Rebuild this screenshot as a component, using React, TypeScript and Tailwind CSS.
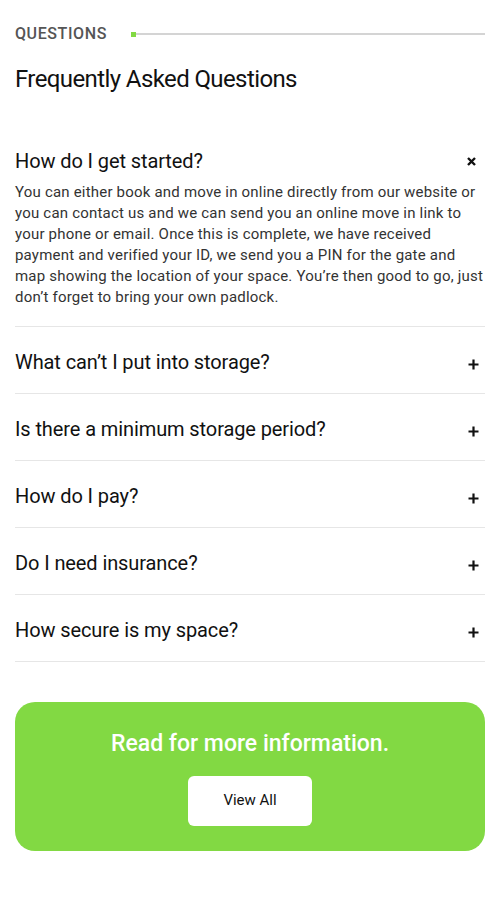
import { useState } from "react";

type Faq = {
  question: string;
  answer: string;
};

const faqs: Faq[] = [
  {
    question: "How do I get started?",
    answer:
      "You can either book and move in online directly from our website or you can contact us and we can send you an online move in link to your phone or email. Once this is complete, we have received payment and verified your ID, we send you a PIN for the gate and map showing the location of your space. You\u2019re then good to go, just don\u2019t forget to bring your own padlock.",
  },
  { question: "What can\u2019t I put into storage?", answer: "" },
  { question: "Is there a minimum storage period?", answer: "" },
  { question: "How do I pay?", answer: "" },
  { question: "Do I need insurance?", answer: "" },
  { question: "How secure is my space?", answer: "" },
];

const PlusIcon = () => (
  <svg width="11" height="11" viewBox="0 0 11 11" fill="none">
    <path d="M5.5 0.5v10M0.5 5.5h10" stroke="#111" strokeWidth="2.2" />
  </svg>
);

const CloseIcon = () => (
  <svg width="9" height="9" viewBox="0 0 9 9" fill="none">
    <path d="M1 1l7 7M8 1L1 8" stroke="#111" strokeWidth="2.4" />
  </svg>
);

const FaqItem = ({
  faq,
  open,
  onToggle,
}: {
  faq: Faq;
  open: boolean;
  onToggle: () => void;
}) => {
  return (
    <div className="border-b border-[#e6e6e6]">
      <button
        onClick={onToggle}
        className="flex w-full items-center justify-between h-[66px] pt-[4px] text-left"
      >
        <span className="text-[20px] text-[#111] tracking-[-0.1px]">
          {faq.question}
        </span>
        <span className={open ? "mr-[9px] mt-[1px]" : "mr-[6px] mt-[5px]"}>
          {open ? <CloseIcon /> : <PlusIcon />}
        </span>
      </button>
      {open && (
        <p className="-mt-[10px] pb-[18px] text-[15px] leading-[21px] tracking-[0.2px] text-[#333]">
          {faq.answer}
        </p>
      )}
    </div>
  );
};

export default function App() {
  const [openIndex, setOpenIndex] = useState<number | null>(0);

  return (
    <div
      className="w-[500px] min-h-[901px] bg-white px-[15px] pt-[22px]"
      style={{ fontFamily: "Roboto, 'Liberation Sans', sans-serif" }}
    >
      <div className="flex items-center">
        <span className="text-[16px] font-medium uppercase tracking-[0.6px] text-[#555]">
          Questions
        </span>
        <div className="ml-[24px] flex flex-1 items-center">
          <span className="block h-[5px] w-[5px] bg-[#82d943]" />
          <span className="block h-[2px] flex-1 bg-[#d4d4d4]" />
        </div>
      </div>

      <h2 className="mt-[17px] text-[24px] leading-[32px] text-[#111] tracking-[-0.6px]">
        Frequently Asked Questions
      </h2>

      <div className="mt-[31px]">
        {faqs.map((faq, i) => (
          <FaqItem
            key={faq.question}
            faq={faq}
            open={openIndex === i}
            onToggle={() => setOpenIndex(openIndex === i ? null : i)}
          />
        ))}
      </div>

      <div className="mt-[40px] flex flex-col items-center rounded-[20px] bg-[#82d943] pt-[25px] pb-[25px]">
        <p className="text-[23px] font-medium text-white">
          Read for more information.
        </p>
        <button className="mt-[14px] h-[50px] w-[124px] rounded-[6px] bg-white text-[15px] text-[#111]">
          View All
        </button>
      </div>
    </div>
  );
}
